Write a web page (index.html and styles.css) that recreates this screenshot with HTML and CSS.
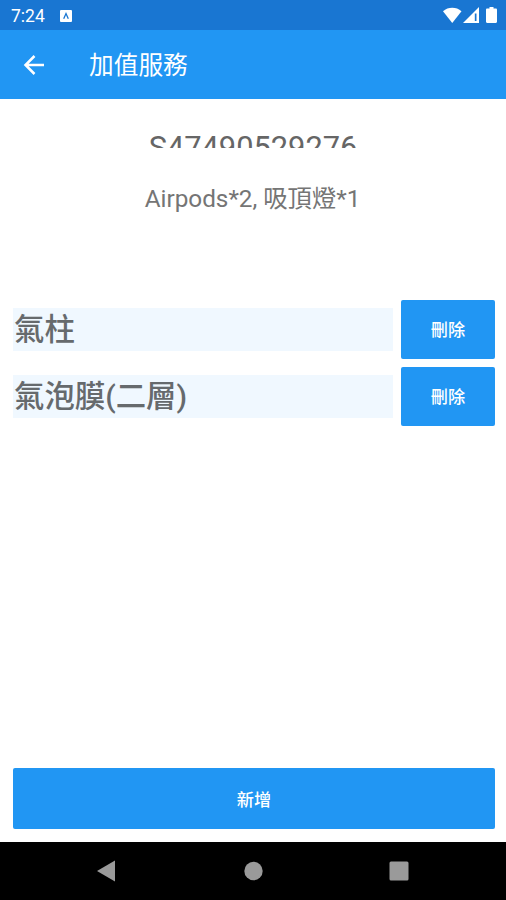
FILE: index.html
```
<!DOCTYPE html>
<html lang="zh-Hant">
<head>
    <meta charset="UTF-8">
    <meta name="viewport" content="width=device-width, initial-scale=1.0">
    <title>加值服務</title>
    <link rel="stylesheet" href="styles.css">
</head>
<body>

    <div class="status-bar">
        <span class="clock">7:24</span>
        <svg class="app-icon" width="12" height="12" viewBox="0 0 12 12">
            <rect width="12" height="12" rx="1" fill="#fff"/>
            <path d="M3.7 8.8L6 3.6l2.3 5.2" fill="none" stroke="#1976d2" stroke-width="1.3"/>
        </svg>
        <!-- wifi, signal, battery -->
        <svg class="status-icons" width="56" height="18" viewBox="0 0 56 18">
            <path d="M0 4.2C5.2-.4 13.3-.4 18.5 4.2L9.25 16z" fill="#fff"/>
            <path d="M36 0v16H20z" fill="#fff"/>
            <path d="M31.8 6.5h1.7v7.5h-1.7z" fill="#1976d2"/>
            <path d="M46.5 0h4v1.6h2.3c.7 0 1.2.5 1.2 1.2v12c0 .7-.5 1.2-1.2 1.2h-8.6c-.7 0-1.2-.5-1.2-1.2v-12c0-.7.5-1.2 1.2-1.2h2.3z" fill="#fff"/>
        </svg>
    </div>

    <header class="toolbar">
        <a href="#" class="back-button">
            <svg width="22" height="20" viewBox="0 0 22 20">
                <path d="M21 10H3M11.5 1L2.5 10l9 9" fill="none" stroke="#fff" stroke-width="2.5"/>
            </svg>
        </a>
        <h1>加值服務</h1>
    </header>

    <main class="content">
        <p class="order-number">S47490529276</p>
        <p class="order-items">Airpods*2, 吸頂燈*1</p>

        <div class="service-list">
            <div class="service-item">
                <span class="service-name">氣柱</span>
                <button class="btn delete-btn">刪除</button>
            </div>
            <div class="service-item">
                <span class="service-name">氣泡膜(二層)</span>
                <button class="btn delete-btn">刪除</button>
            </div>
        </div>

        <button class="btn add-btn">新增</button>
    </main>

    <nav class="nav-bar">
        <svg width="20" height="22" viewBox="0 0 20 22"><path d="M0 11L18 .5v21z" fill="#9a9a9a"/></svg>
        <svg width="20" height="20" viewBox="0 0 20 20"><circle cx="10.5" cy="10" r="9.2" fill="#9a9a9a"/></svg>
        <svg width="20" height="20" viewBox="0 0 20 20"><rect x=".5" y=".5" width="19" height="19" rx="1.5" fill="#9a9a9a"/></svg>
    </nav>

</body>
</html>
```
FILE: styles.css
```
* {
    box-sizing: border-box;
}

body {
    font-family: Roboto, "Noto Sans CJK TC", sans-serif;
    margin: 0;
    height: 900px;
    display: flex;
    flex-direction: column;
    background: #fff;
    overflow: hidden;
}

.status-bar {
    height: 30px;
    flex-shrink: 0;
    display: flex;
    align-items: center;
    padding: 2px 7px 0 11px;
    background: #1976d2;
    color: #fff;
}

.clock {
    width: 49px;
    font-size: 17.5px;
}

.status-icons {
    margin-left: auto;
}

.toolbar {
    height: 69px;
    flex-shrink: 0;
    display: flex;
    align-items: center;
    padding-left: 23px;
    background: #2196f3;
    color: #fff;
}

.back-button {
    display: flex;
    width: 66px;
}

.toolbar h1 {
    margin: 0;
    padding-top: 3px;
    font-size: 24.7px;
    font-weight: 400;
    line-height: 36px;
}

.content {
    flex: 1;
    display: flex;
    flex-direction: column;
    padding: 29px 11px 13px 13px;
}

/* fixed height, the number is cut off below */
.order-number {
    height: 20px;
    margin: 0;
    padding-right: 2px;
    overflow: hidden;
    text-align: center;
    color: #666;
    font-size: 30.8px;
    line-height: 39px;
}

.order-items {
    height: 100px;
    margin: 32px 0 20px;
    padding-right: 3px;
    text-align: center;
    color: #757575;
    font-size: 24.3px;
    line-height: 37px;
}

.service-list {
    display: flex;
    flex-direction: column;
    gap: 8px;
}

.service-item {
    display: flex;
    align-items: center;
    gap: 8px;
}

.service-name {
    flex: 1;
    height: 43px;
    padding-left: 1px;
    background: #f0f8ff;
    color: #666a6d;
    font-size: 30.4px;
    font-weight: 500;
    line-height: 44px;
}

.btn {
    border: none;
    border-radius: 2px;
    padding: 0;
    background: #2196f3;
    color: #fff;
    font-family: inherit;
    font-size: 17.2px;
    font-weight: 500;
}

.delete-btn {
    width: 94px;
    height: 59px;
    padding-bottom: 2px;
}

.add-btn {
    height: 61px;
    margin-top: auto;
    padding-bottom: 1px;
}

.nav-bar {
    height: 58px;
    flex-shrink: 0;
    display: flex;
    align-items: center;
    justify-content: space-between;
    padding: 0 97px;
    background: #000;
}
```
